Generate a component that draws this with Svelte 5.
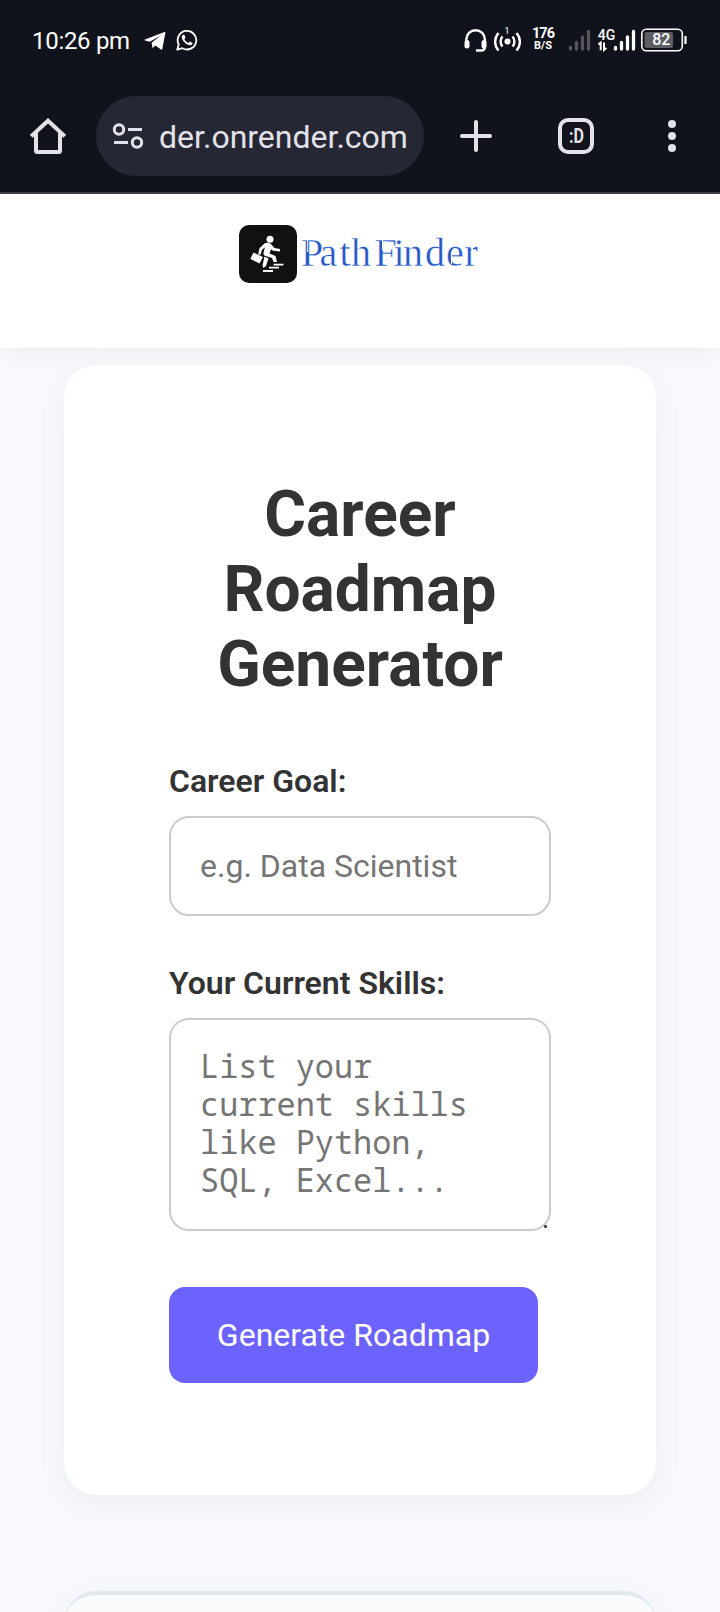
<script>
  let goal = $state('');
  let skills = $state('');
</script>

<div class="screen">
  <div class="status">
    <span class="time">10:26 pm</span>
    <svg class="tg" width="22" height="20" viewBox="0 0 22 20"><path d="M1 8.600 20.500 1c.6-.2 1 .1.9.8L18.300 18c-.1.8-.6 1-1.300.6l-5.600-4.100-2.800 2.700-1-5.500L17 4.200 5.800 10.800 1 9.400c-.8-.3-.7-.6 0-.8Z" fill="#fff" /></svg>
    <svg class="wa" width="22" height="22" viewBox="0 0 22 22"><path d="M1.200 20.700 2.700 15.400A9.300 9.300 0 1 1 6.300 19.200Z" fill="none" stroke="#fff" stroke-width="1.800" stroke-linejoin="round" /><path d="M7.300 5.700c-.8.3-1.600 1.300-1.500 2.600.3 3.700 4.700 7.900 8.500 7.900 1.200-.1 2.200-.9 2.400-2.200l-2.900-1.500-1.500 1.600c-1.700-.7-3.300-2.100-4-4L9.500 8.700 8.300 5.700Z" fill="#fff" /></svg>
    <span class="grow"></span>
    <svg width="225" height="30" viewBox="465 25 225 30" class="indicators">
      <g fill="none" stroke="#fff" stroke-width="2.400">
        <path d="M467.300 43v-3.500a9.300 9.300 0 0 1 18.600 0V47q0 3.500-4 3.500H477" />
        <path d="M468 42.500v3.500M485 42.500v3.500" stroke-width="5" stroke-linecap="round" />
        <path d="M503.500 36.500a7.500 7.500 0 0 0 0 10M513.500 36.500a7.500 7.500 0 0 1 0 10M499.500 33a13 13 0 0 0 0 17.500M517.500 33a13 13 0 0 1 0 17.500" />
      </g>
      <circle cx="508.500" cy="41.500" r="3" fill="#fff" />
      <text x="505.500" y="34" font-size="9">1</text>
      <text x="544.500" y="37.800" class="b" font-size="14.500" text-anchor="middle" textLength="23">176</text>
      <text x="544" y="49.300" class="b" font-size="11" text-anchor="middle">B/S</text>
      <g stroke-width="3.300" stroke-linecap="round">
        <path d="M571.500 47.500v1.500M577.500 42.500v6.500M583.500 37v12M589.500 31.500v17.500" stroke="#55565c" />
        <path d="M616.500 47.500v1.500M622.500 42.500v6.500M628.500 37v12M634.500 31.500v17.500" stroke="#fff" />
      </g>
      <text x="598.700" y="39.800" font-size="14" class="m">4G</text>
      <path d="M599.500 44.500l2.200-1.800v7.500M605 42.500v7.500l2.500-2" fill="none" stroke="#fff" stroke-width="2" />
      <rect x="645.500" y="32" width="28.500" height="16" rx="2" fill="#5d5e64" />
      <rect x="642.800" y="29.200" width="40.500" height="21.500" rx="4.500" fill="none" stroke="#fff" stroke-width="1.600" />
      <path d="M686.500 36v8" stroke="#fff" stroke-width="2.200" />
      <text x="662.300" y="45.300" font-size="16" class="m" text-anchor="middle">82</text>
    </svg>
  </div>

  <div class="toolbar">
    <svg class="home" width="36" height="36" viewBox="0 0 36 36"><path d="M1.200 18.300 18 2.700l16.800 15.600M6 15v17.500q0 1.500 1.500 1.500h21q1.500 0 1.500-1.500V15" fill="none" stroke="#e4e2e9" stroke-width="4" /></svg>
    <div class="url">
      <svg width="32" height="28" viewBox="0 0 32 28"><g fill="none" stroke="#e4e2e9" stroke-width="3"><circle cx="7" cy="7.500" r="4.700" /><circle cx="25" cy="20.500" r="4.700" /><path d="M16 7.500h14M2 20.500h14" /></g></svg>
      <span>der.onrender.com</span>
    </div>
    <svg class="plus" width="32" height="32" viewBox="0 0 32 32"><path d="M2 16h28M16 2v28" stroke="#e4e2e9" stroke-width="4" stroke-linecap="round" /></svg>
    <div class="tab"><svg width="28" height="28" viewBox="0 0 28 28"><text x="7" y="21" textLength="15" lengthAdjust="spacingAndGlyphs">:D</text></svg></div>
    <svg class="dots" width="8" height="32" viewBox="0 0 8 32"><g fill="#e4e2e9"><circle cx="4" cy="4" r="4" /><circle cx="4" cy="16" r="4" /><circle cx="4" cy="28" r="4" /></g></svg>
  </div>

  <header>
    <svg width="58" height="58" viewBox="0 0 58 58">
      <rect width="58" height="58" rx="10" fill="#111" />
      <circle cx="31" cy="14.300" r="3.500" fill="#fff" />
      <path d="M12.500 31.500l2-4 9.500 4.500-3.500 6.500-9-4.500Z" fill="#fff" />
      <path d="M25.500 18.500q3-1.500 6.500.5l3.500 4 5.500 1v2.500l-7-.7-2-1.500-1.500 4.200 6 2.500 1.500 6h-3.500l-1.500-4-7-2.300q-2-.7-1.500-3l1.500-5.500-3 2.500-1.500 5-2.300-.5 1.300-6Z" fill="#fff" />
      <path d="M25.500 31.500l4 2-2.500 7.500-2.500 2-1-2.500Z" fill="#fff" />
      <path d="M34.500 39.700h10M30 42.700h10M24 46h10" stroke="#fff" stroke-width="1.800" />
    </svg>
    <svg class="brand" width="184" height="58" viewBox="0 0 184 58">
      <text x="4 22.500 42.500 54 77.500 96.500 106 128 149 167.500" y="41">PathFinder</text>
      <path d="M10.700 13v14M31.500 26v4M62 20v16M85.500 13v12M114.500 22v13M139.500 24v14M154.500 27v12M175.500 22v9" stroke="#fff" stroke-width="1" />
    </svg>
  </header>

  <main>
    <section class="card">
      <h1>Career Roadmap Generator</h1>
      <label for="goal">Career Goal:</label>
      <input id="goal" placeholder="e.g. Data Scientist" bind:value={goal} />
      <label class="second" for="skills">Your Current Skills:</label>
      <div class="area">
        <textarea id="skills" placeholder="List your current skills like Python, SQL, Excel..." bind:value={skills}></textarea>
        <i></i>
      </div>
      <button>Generate Roadmap</button>
    </section>
    <section class="result"></section>
  </main>
</div>

<style>
  :global(body) { background: #f7f9fd; }
  .screen { height: 1612px; overflow: hidden; display: flex; flex-direction: column; font-family: Roboto, sans-serif; color: #333; background: #f7f9fd; }
  .screen, .screen * { box-sizing: border-box; }
  svg { display: block; flex: none; }
  .status { flex: none; height: 80px; padding: 0 31px 0 32px; background: #10131b; display: flex; align-items: center; color: #fff; }
  .time { font-size: 24px; letter-spacing: -.3px; width: 112px; padding-top: 2px; white-space: nowrap; }
  .tg { margin-top: 2px; }
  .wa { margin-left: 10px; }
  .grow { flex: 1; }
  .indicators text { fill: #fff; }
  .indicators .b { font-weight: 700; }
  .indicators .m { font-weight: 500; }
  .toolbar { flex: none; height: 114px; padding: 16px 44px 0 30px; background: #10131b; border-bottom: 2px solid #3f4048; display: flex; align-items: flex-start; }
  .home { margin-top: 22px; }
  .url { width: 328px; height: 80px; margin-left: 30px; padding-left: 16px; border-radius: 40px; background: #252834; display: flex; align-items: center; gap: 15px; font-size: 32px; color: #e4e2e9; white-space: nowrap; }
  .url span { padding-top: 2px; }
  .plus { margin: 24px 0 0 36px; }
  .tab { width: 36px; height: 36px; margin: 22px 0 0 66px; border: 4px solid #e4e2e9; border-radius: 10px; }
  .tab text { font: 700 20px Roboto, sans-serif; fill: #e4e2e9; }
  .dots { margin: 24px 0 0 auto; }
  header { flex: none; height: 154px; padding: 31px 0 0 239px; background: #fff; display: flex; box-shadow: 0 4px 20px rgba(0, 0, 0, .05); }
  .brand text { font: 40px "Liberation Serif", serif; fill: #2458c6; stroke: #fff; stroke-width: .4px; }
  main { flex: none; padding: 17px 64px 0; }
  .card { height: 1130px; padding: 112px 105px 0; background: #fff; border-radius: 32px; box-shadow: 0 8px 32px rgba(0, 0, 0, .05); }
  h1 { margin: 0 0 60px; font-size: 64px; line-height: 75px; font-weight: 700; text-align: center; }
  label { display: block; height: 54px; font-size: 32px; line-height: 38px; font-weight: 600; white-space: nowrap; }
  .second { margin-top: 48px; }
  input, textarea { display: block; width: 382px; margin: 0; padding: 0 29px; border: 2px solid #ccc; border-radius: 20px; background: #fff; outline: 0; }
  input { height: 100px; font: 32px Roboto, sans-serif; }
  .area { position: relative; width: 382px; height: 213px; }
  textarea { height: 213px; padding: 27px 29px; font: 31.9px/38px "Droid Sans Mono", "Noto Sans Mono", "DejaVu Sans Mono", monospace; resize: none; overflow: hidden; }
  ::placeholder { color: #757575; opacity: 1; }
  .area i { position: absolute; right: 4px; bottom: 3px; width: 3px; height: 3px; border-radius: 1px; background: #444; }
  button { display: block; width: 369px; height: 96px; margin: 56px 0 0; padding: 0; border: 0; border-radius: 16px; background: #6c63ff; color: #fff; font: 32px Roboto, sans-serif; }
  .result { height: 200px; margin-top: 96px; background: #f8fafc; border-top: 4px solid #e2e8f0; border-radius: 32px; box-shadow: 0 8px 32px rgba(0, 0, 0, .05); }
</style>
